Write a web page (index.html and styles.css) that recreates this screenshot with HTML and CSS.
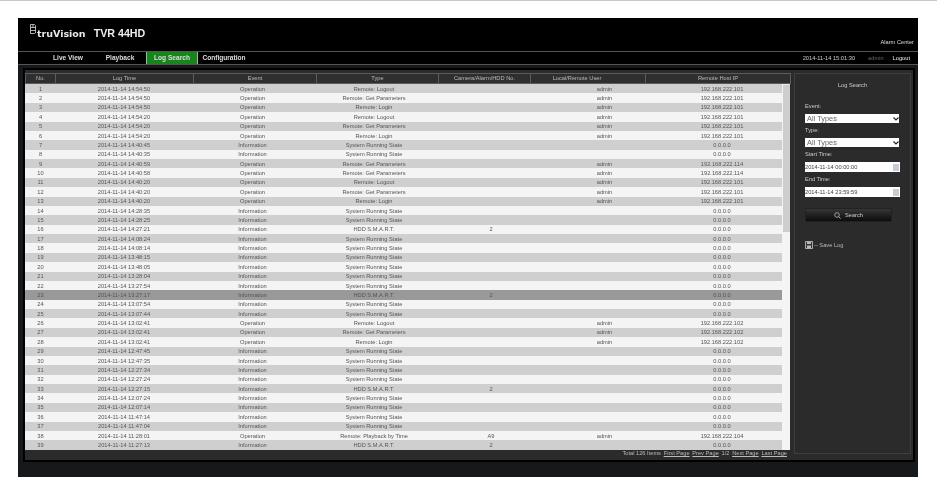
FILE: index.html
```html
<!DOCTYPE html>
<html lang="en">
<head>
    <meta charset="UTF-8">
    <title>TVR 44HD - Log Search</title>
    <link rel="stylesheet" href="styles.css">
</head>
<body>
    <div class="frame">
        <header class="top-bar">
            <div class="brand">
                <svg class="brand-icon" width="6" height="10" viewBox="0 0 6 10">
                    <path d="M.5.5h4l1 1v7.5l-1 .5h-4zM.5 3.5h5M.5 6.5h5M2 2h2" fill="none" stroke="#ddd" stroke-width=".8"/>
                </svg>
                <span class="brand-name">truVision</span>
                <span class="brand-model">TVR 44HD</span>
            </div>
            <a class="alarm-link">Alarm Center</a>
        </header>

        <nav class="nav-bar">
            <a class="nav-tab">Live View</a>
            <a class="nav-tab">Playback</a>
            <a class="nav-tab active">Log Search</a>
            <a class="nav-tab">Configuration</a>
            <div class="nav-status">
                <span class="clock">2014-11-14 15:01:30</span>
                <span class="user">admin</span>
                <a class="logout">Logout</a>
            </div>
        </nav>

        <main class="content">
            <section class="log-area">
                <table class="log-head">
                    <tr>
                        <th class="h-no">No.</th>
                        <th class="h-time">Log Time</th>
                        <th class="h-event">Event</th>
                        <th class="h-type">Type</th>
                        <th class="h-cam">Camera/Alarm/HDD No.</th>
                        <th class="h-user">Local/Remote User</th>
                        <th class="h-ip">Remote Host IP</th>
                    </tr>
                </table>
                <div class="log-list">
                    <table class="log-rows">
                        <colgroup>
                            <col class="c-no"><col class="c-time"><col class="c-event"><col class="c-type"><col class="c-cam"><col class="c-user"><col class="c-ip">
                        </colgroup>
                        <tr><td>1</td><td>2014-11-14 14:54:50</td><td>Operation</td><td>Remote: Logout</td><td></td><td>admin</td><td>192.168.222.101</td></tr>
                        <tr><td>2</td><td>2014-11-14 14:54:50</td><td>Operation</td><td>Remote: Get Parameters</td><td></td><td>admin</td><td>192.168.222.101</td></tr>
                        <tr><td>3</td><td>2014-11-14 14:54:50</td><td>Operation</td><td>Remote: Login</td><td></td><td>admin</td><td>192.168.222.101</td></tr>
                        <tr><td>4</td><td>2014-11-14 14:54:20</td><td>Operation</td><td>Remote: Logout</td><td></td><td>admin</td><td>192.168.222.101</td></tr>
                        <tr><td>5</td><td>2014-11-14 14:54:20</td><td>Operation</td><td>Remote: Get Parameters</td><td></td><td>admin</td><td>192.168.222.101</td></tr>
                        <tr><td>6</td><td>2014-11-14 14:54:20</td><td>Operation</td><td>Remote: Login</td><td></td><td>admin</td><td>192.168.222.101</td></tr>
                        <tr><td>7</td><td>2014-11-14 14:40:45</td><td>Information</td><td>System Running State</td><td></td><td></td><td>0.0.0.0</td></tr>
                        <tr><td>8</td><td>2014-11-14 14:40:35</td><td>Information</td><td>System Running State</td><td></td><td></td><td>0.0.0.0</td></tr>
                        <tr><td>9</td><td>2014-11-14 14:40:59</td><td>Operation</td><td>Remote: Get Parameters</td><td></td><td>admin</td><td>192.168.222.114</td></tr>
                        <tr><td>10</td><td>2014-11-14 14:40:58</td><td>Operation</td><td>Remote: Get Parameters</td><td></td><td>admin</td><td>192.168.222.114</td></tr>
                        <tr><td>11</td><td>2014-11-14 14:40:20</td><td>Operation</td><td>Remote: Logout</td><td></td><td>admin</td><td>192.168.222.101</td></tr>
                        <tr><td>12</td><td>2014-11-14 14:40:20</td><td>Operation</td><td>Remote: Get Parameters</td><td></td><td>admin</td><td>192.168.222.101</td></tr>
                        <tr><td>13</td><td>2014-11-14 14:40:20</td><td>Operation</td><td>Remote: Login</td><td></td><td>admin</td><td>192.168.222.101</td></tr>
                        <tr><td>14</td><td>2014-11-14 14:28:35</td><td>Information</td><td>System Running State</td><td></td><td></td><td>0.0.0.0</td></tr>
                        <tr><td>15</td><td>2014-11-14 14:28:25</td><td>Information</td><td>System Running State</td><td></td><td></td><td>0.0.0.0</td></tr>
                        <tr><td>16</td><td>2014-11-14 14:27:21</td><td>Information</td><td>HDD S.M.A.R.T.</td><td>2</td><td></td><td>0.0.0.0</td></tr>
                        <tr><td>17</td><td>2014-11-14 14:08:24</td><td>Information</td><td>System Running State</td><td></td><td></td><td>0.0.0.0</td></tr>
                        <tr><td>18</td><td>2014-11-14 14:08:14</td><td>Information</td><td>System Running State</td><td></td><td></td><td>0.0.0.0</td></tr>
                        <tr><td>19</td><td>2014-11-14 13:48:15</td><td>Information</td><td>System Running State</td><td></td><td></td><td>0.0.0.0</td></tr>
                        <tr><td>20</td><td>2014-11-14 13:48:05</td><td>Information</td><td>System Running State</td><td></td><td></td><td>0.0.0.0</td></tr>
                        <tr><td>21</td><td>2014-11-14 13:28:04</td><td>Information</td><td>System Running State</td><td></td><td></td><td>0.0.0.0</td></tr>
                        <tr><td>22</td><td>2014-11-14 13:27:54</td><td>Information</td><td>System Running State</td><td></td><td></td><td>0.0.0.0</td></tr>
                        <tr class="selected"><td>23</td><td>2014-11-14 13:27:17</td><td>Information</td><td>HDD S.M.A.R.T.</td><td>2</td><td></td><td>0.0.0.0</td></tr>
                        <tr><td>24</td><td>2014-11-14 13:07:54</td><td>Information</td><td>System Running State</td><td></td><td></td><td>0.0.0.0</td></tr>
                        <tr><td>25</td><td>2014-11-14 13:07:44</td><td>Information</td><td>System Running State</td><td></td><td></td><td>0.0.0.0</td></tr>
                        <tr><td>26</td><td>2014-11-14 13:02:41</td><td>Operation</td><td>Remote: Logout</td><td></td><td>admin</td><td>192.168.222.102</td></tr>
                        <tr><td>27</td><td>2014-11-14 13:02:41</td><td>Operation</td><td>Remote: Get Parameters</td><td></td><td>admin</td><td>192.168.222.102</td></tr>
                        <tr><td>28</td><td>2014-11-14 13:02:41</td><td>Operation</td><td>Remote: Login</td><td></td><td>admin</td><td>192.168.222.102</td></tr>
                        <tr><td>29</td><td>2014-11-14 12:47:45</td><td>Information</td><td>System Running State</td><td></td><td></td><td>0.0.0.0</td></tr>
                        <tr><td>30</td><td>2014-11-14 12:47:35</td><td>Information</td><td>System Running State</td><td></td><td></td><td>0.0.0.0</td></tr>
                        <tr><td>31</td><td>2014-11-14 12:27:34</td><td>Information</td><td>System Running State</td><td></td><td></td><td>0.0.0.0</td></tr>
                        <tr><td>32</td><td>2014-11-14 12:27:24</td><td>Information</td><td>System Running State</td><td></td><td></td><td>0.0.0.0</td></tr>
                        <tr><td>33</td><td>2014-11-14 12:27:15</td><td>Information</td><td>HDD S.M.A.R.T.</td><td>2</td><td></td><td>0.0.0.0</td></tr>
                        <tr><td>34</td><td>2014-11-14 12:07:24</td><td>Information</td><td>System Running State</td><td></td><td></td><td>0.0.0.0</td></tr>
                        <tr><td>35</td><td>2014-11-14 12:07:14</td><td>Information</td><td>System Running State</td><td></td><td></td><td>0.0.0.0</td></tr>
                        <tr><td>36</td><td>2014-11-14 11:47:14</td><td>Information</td><td>System Running State</td><td></td><td></td><td>0.0.0.0</td></tr>
                        <tr><td>37</td><td>2014-11-14 11:47:04</td><td>Information</td><td>System Running State</td><td></td><td></td><td>0.0.0.0</td></tr>
                        <tr><td>38</td><td>2014-11-14 11:28:01</td><td>Operation</td><td>Remote: Playback by Time</td><td>A9</td><td>admin</td><td>192.168.222.104</td></tr>
                        <tr><td>39</td><td>2014-11-14 11:27:13</td><td>Information</td><td>HDD S.M.A.R.T.</td><td>2</td><td></td><td>0.0.0.0</td></tr>
                    </table>
                    <div class="scroll-track"><div class="scroll-thumb"></div></div>
                </div>
                <div class="pager">
                    <span>Total 126 Items</span>
                    <a>First Page</a>
                    <a>Prev Page</a>
                    <span>1/2</span>
                    <a>Next Page</a>
                    <a>Last Page</a>
                </div>
            </section>

            <aside class="search-panel">
                <h2 class="panel-title">Log Search</h2>
                <label class="field-label first">Event:</label>
                <div class="select-wrap">
                    <select class="field-select"><option>All Types</option></select>
                    <svg class="chevron" width="6" height="4" viewBox="0 0 6 4"><path d="M.5.5 3 3 5.500.5" fill="none" stroke="#222" stroke-width="1.100"/></svg>
                </div>
                <label class="field-label">Type:</label>
                <div class="select-wrap">
                    <select class="field-select"><option>All Types</option></select>
                    <svg class="chevron" width="6" height="4" viewBox="0 0 6 4"><path d="M.5.5 3 3 5.500.5" fill="none" stroke="#222" stroke-width="1.100"/></svg>
                </div>
                <label class="field-label">Start Time:</label>
                <div class="time-wrap">
                    <input class="field-time" type="text" value="2014-11-14 00:00:00">
                    <span class="calendar"></span>
                </div>
                <label class="field-label">End Time:</label>
                <div class="time-wrap">
                    <input class="field-time" type="text" value="2014-11-14 23:59:59">
                    <span class="calendar"></span>
                </div>
                <button class="search-btn">
                    <svg width="7" height="7" viewBox="0 0 7 7"><circle cx="3" cy="3" r="2.300" fill="none" stroke="#ccc" stroke-width=".7"/><path d="M4.700 4.700 6.600 6.600" stroke="#ccc" stroke-width=".8"/></svg>
                    <span>Search</span>
                </button>
                <a class="save-log">
                    <svg width="8" height="8" viewBox="0 0 8 8"><path d="M.5.500h7v7h-7z" fill="#333" stroke="#ccc" stroke-width=".8"/><path d="M2 1h4v2H2zM2 4.500h4V7H2z" fill="#bbb"/></svg>
                    <span>-- Save Log</span>
                </a>
            </aside>
        </main>
    </div>
</body>
</html>
```

FILE: styles.css
```css
body {
    margin: 0;
    padding: 17px 19px 1px 18px;
    border-top: 1px solid #c8c8c8;
    background: #fff;
    font-family: "Liberation Sans", Arial, sans-serif;
    font-size: 5.7px;
    overflow: hidden;
}

.frame {
    width: 900px;
    height: 459px;
    background: #16191c;
    color: #ccc;
    filter: blur(0.3px);
}

/* header */
.top-bar {
    height: 33px;
    box-sizing: border-box;
    background: #000;
    display: flex;
    justify-content: space-between;
    padding: 6px 4px 0 12px;
}

.brand {
    display: flex;
    align-items: flex-start;
    color: #fff;
}

.brand-icon {
    margin-right: 1px;
}

.brand-name {
    font-family: "DejaVu Sans", sans-serif;
    font-weight: bold;
    font-size: 9.500px;
    line-height: 9px;
    margin-top: 5px;
    margin-right: 8px;
    color: #e8e8e8;
}

.brand-model {
    font-weight: bold;
    font-size: 10.700px;
    line-height: 10px;
    margin-top: 4px;
    color: #eee;
}

.alarm-link {
    align-self: flex-end;
    line-height: 8px;
    margin-bottom: 5px;
    color: #ddd;
}

/* nav */
.nav-bar {
    height: 14px;
    box-sizing: border-box;
    border-top: 1px solid #555;
    border-bottom: 1px solid #555;
    background: #000;
    display: flex;
    padding-left: 24px;
}

.nav-tab {
    width: 52px;
    text-align: center;
    font-size: 6.600px;
    font-weight: bold;
    line-height: 12px;
    color: #ddd;
}

.nav-tab.active {
    background: #17851c;
    color: #ddd;
    box-sizing: border-box;
    border: 1px solid #9fb99f;
    border-width: 0 1px;
}

.nav-status {
    margin-left: auto;
    display: flex;
    line-height: 12px;
    padding-right: 8px;
}

.clock {
    margin-right: 13px;
}

.user {
    color: #666;
    margin-right: 9px;
}

.logout {
    color: #eee;
}

/* main panel */
.content {
    margin: 3px 3.500px 0 5px;
    height: 394px;
    box-sizing: border-box;
    border: 2px solid #000;
    background: #2b2b2b;
    display: flex;
    padding-top: 3px;
}

.log-area {
    width: 765px;
    margin-right: 4px;
    flex: none;
}

table {
    border-collapse: collapse;
    table-layout: fixed;
}

.log-head {
    width: 765px;
    height: 11px;
    background: #2f2f2f;
    border: 1px solid #5c5c5c;
}

.log-head th {
    box-sizing: border-box;
    padding: 0;
    font-weight: normal;
    color: #bbb;
    border-left: 1px solid #5c5c5c;
    line-height: 9px;
}

.h-no { width: 30px; }
.h-time { width: 138px; }
.h-event { width: 123px; }
.h-type { width: 122px; }
.h-cam { width: 92px; }
.h-user { width: 115px; padding-right: 22px !important; }
.h-ip { width: 145px; }

.log-list {
    display: flex;
    justify-content: space-between;
    align-items: flex-start;
    background: #f4f4f4;
    height: 366px;
}

.log-rows {
    width: 757px;
}

.c-no { width: 31px; }
.c-time { width: 136px; }
.c-event { width: 121px; }
.c-type { width: 122px; }
.c-cam { width: 112px; }
.c-user { width: 115px; }
.c-ip { width: 120px; }

.log-rows tr {
    height: 9.385px;
}

.log-rows tr:nth-child(odd) {
    background: #cfcfcf;
}

.log-rows tr.selected {
    background: #999;
}

.log-rows td {
    padding: 0;
    text-align: center;
    color: #555;
    line-height: 8px;
}

.scroll-track {
    width: 7px;
}

.scroll-thumb {
    height: 148px;
    background: #cdcdcd;
    border-top: 1px solid #e8e8e8;
    box-sizing: border-box;
}

.pager {
    display: flex;
    justify-content: flex-end;
    gap: 2.700px;
    line-height: 7px;
    padding-right: 3px;
    color: #bbb;
}

.pager a {
    text-decoration: underline;
}

/* search panel */
.search-panel {
    width: 117px;
    height: 381px;
    box-sizing: border-box;
    border: 1px solid #3e3e3e;
    padding: 7px 10px 0 10px;
}

.panel-title {
    margin: 0 0 13px;
    font-size: 5.700px;
    font-weight: normal;
    line-height: 8px;
    text-align: center;
    color: #ccc;
}

.field-label {
    display: block;
    line-height: 8px;
    margin: 3px 0 4px;
    color: #ccc;
}

.field-label.first {
    margin-top: 0;
}

.select-wrap,
.time-wrap {
    position: relative;
}

.field-select {
    display: block;
    width: 94px;
    height: 9px;
    appearance: none;
    border: 0;
    border-radius: 0;
    padding: 0 0 0 2px;
    background: #fff;
    font: 7.400px "Liberation Sans", Arial, sans-serif;
    line-height: 9px;
    color: #666;
}

.chevron {
    position: absolute;
    right: 1px;
    top: 3px;
}

.field-time {
    display: block;
    width: 95px;
    height: 10px;
    box-sizing: border-box;
    border: 0;
    padding: 0;
    margin-bottom: 1px;
    background: #fff;
    font: 5.700px "Liberation Sans", Arial, sans-serif;
    color: #444;
}

.calendar {
    position: absolute;
    right: 1px;
    top: 1.500px;
    width: 6px;
    height: 7px;
    background: #c5cdd8;
}

.search-btn {
    display: flex;
    align-items: center;
    justify-content: center;
    gap: 4px;
    width: 87px;
    height: 14px;
    margin-top: 11px;
    padding: 0;
    border: 1px solid #222;
    border-radius: 1px;
    background: linear-gradient(#363636, #0c0c0c);
    font: 5.700px "Liberation Sans", Arial, sans-serif;
    color: #ccc;
}

.save-log {
    display: flex;
    align-items: center;
    gap: 1px;
    margin-top: 19px;
    color: #bbb;
}
```
